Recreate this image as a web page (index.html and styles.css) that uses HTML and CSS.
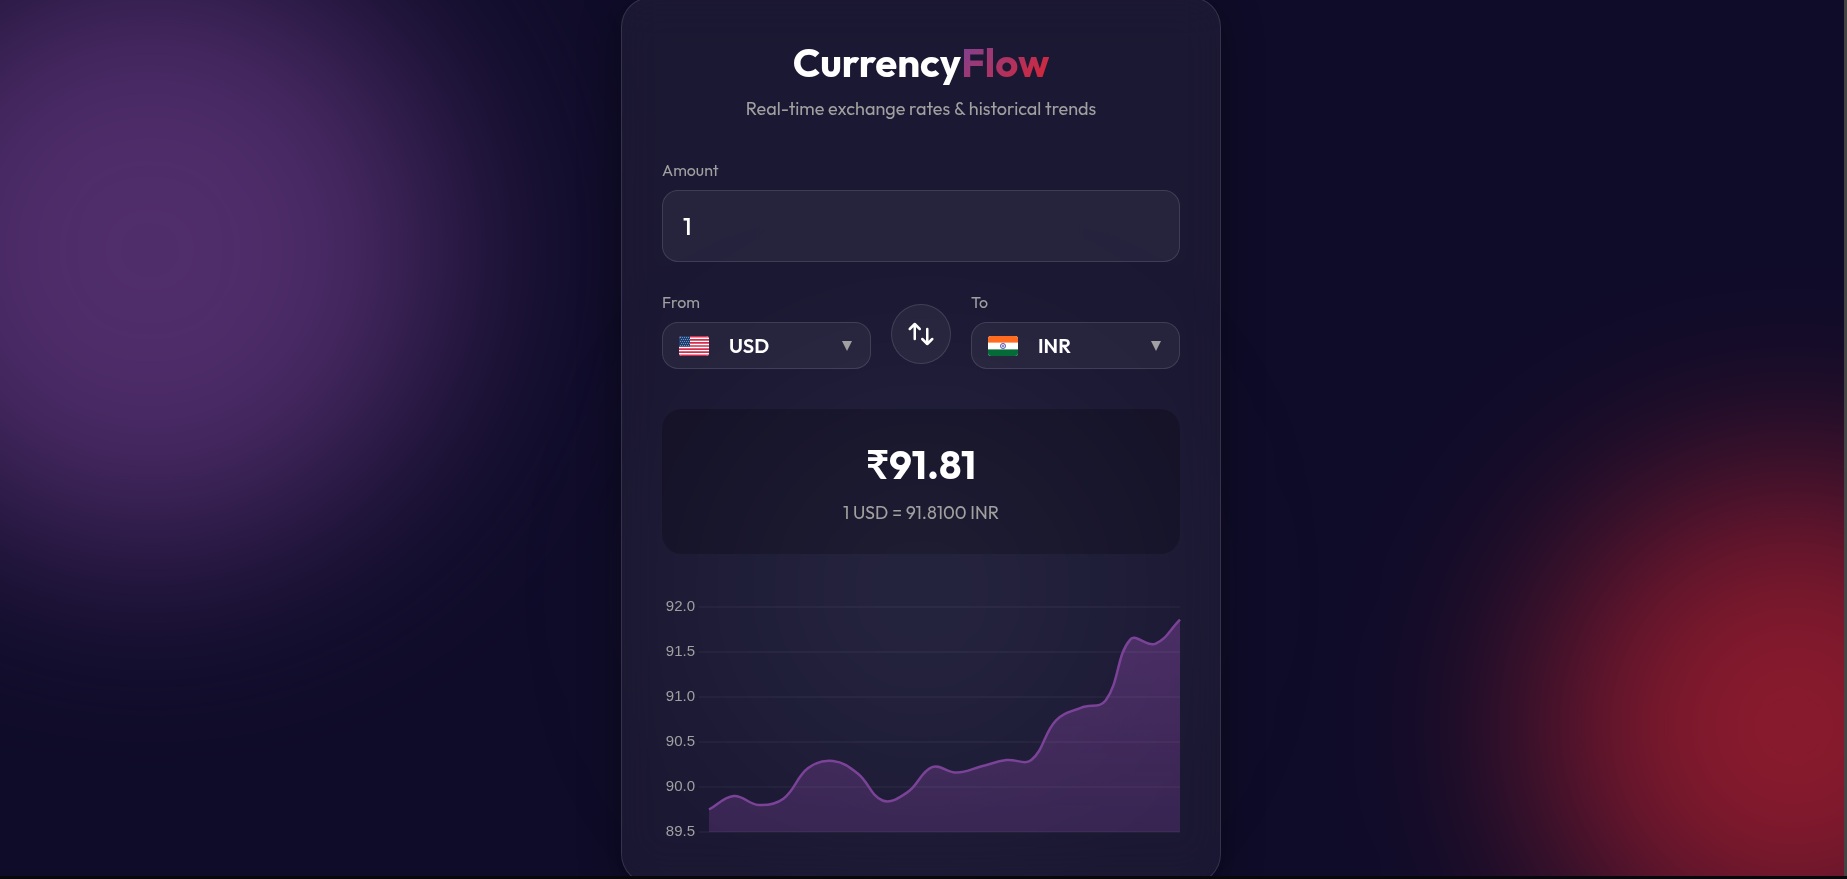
FILE: index.html
```html
<!DOCTYPE html>
<html lang="en">
<head>
<meta charset="utf-8">
<title>CurrencyFlow</title>
<link rel="stylesheet" href="styles.css">
</head>
<body>
<div class="page">
  <div class="blob blob-purple"></div>
  <div class="blob blob-red"></div>
  <div class="blob blob-slate"></div>

  <main class="card">
    <header class="header">
      <h1 class="title">Currency<span class="title-accent">Flow</span></h1>
      <p class="subtitle">Real-time exchange rates &amp; historical trends</p>
    </header>

    <form class="form">
      <div class="field">
        <label class="label" for="amount">Amount</label>
        <input class="amount" id="amount" type="text" inputmode="decimal" value="1">
      </div>

      <div class="pair">
        <div class="field">
          <label class="label" for="from">From</label>
          <div class="picker">
            <svg class="flag" viewBox="0 0 30 20" aria-hidden="true">
              <rect width="30" height="20" fill="#fff"/>
              <path d="M0 .8h30M0 3.9h30M0 6.9h30M0 10h30M0 13.1h30M0 16.1h30M0 19.2h30" stroke="#d22f4e" stroke-width="1.6"/>
              <rect width="11" height="10.5" fill="#1f3f70"/>
              <path d="M1 1.5h10M2 3.5h9M1 5.5h10M2 7.5h9M1 9.5h10" stroke="#6f93b8" stroke-width="1" stroke-dasharray="1 1"/>
            </svg>
            <select class="select" id="from">
              <option selected>USD</option>
              <option>INR</option>
            </select>
            <svg class="caret" viewBox="0 0 10 10" aria-hidden="true"><path d="M0 0h10L5 10z"/></svg>
          </div>
        </div>

        <button class="swap" type="button" aria-label="Swap currencies">
          <svg class="swap-icon" viewBox="0 0 24 24" aria-hidden="true">
            <path d="M7 16V4m0 0L3 8m4-4l4 4m6 0v12m0 0l4-4m-4 4l-4-4"/>
          </svg>
        </button>

        <div class="field">
          <label class="label" for="to">To</label>
          <div class="picker">
            <svg class="flag" viewBox="0 0 30 20" aria-hidden="true">
              <rect width="30" height="20" fill="#fff"/>
              <rect width="30" height="6.6" fill="#ff6b1f"/>
              <rect y="13.4" width="30" height="6.6" fill="#046a38"/>
              <circle cx="15" cy="10" r="2.6" fill="none" stroke="#4a45ad" stroke-width=".8"/>
              <path d="M15 7.4v5.2M12.4 10h5.2M13.2 8.2l3.6 3.6M16.8 8.2l-3.6 3.6" stroke="#4a45ad" stroke-width=".4"/>
            </svg>
            <select class="select" id="to">
              <option>USD</option>
              <option selected>INR</option>
            </select>
            <svg class="caret" viewBox="0 0 10 10" aria-hidden="true"><path d="M0 0h10L5 10z"/></svg>
          </div>
        </div>
      </div>
    </form>

    <section class="result">
      <output class="result-value" for="amount from to">₹91.81</output>
      <p class="result-rate">1 USD = 91.8100 INR</p>
    </section>

    <section class="chart" aria-label="Exchange rate history">
      <div class="axis">
        <span>92.0</span><span>91.5</span><span>91.0</span><span>90.5</span><span>90.0</span><span>89.5</span>
      </div>
      <div class="plot">
        <svg class="plot-svg" viewBox="0 0 471 225" preserveAspectRatio="none" aria-hidden="true">
          <defs>
            <linearGradient id="area-fill" x1="0" y1="0" x2="0" y2="225" gradientUnits="userSpaceOnUse">
              <stop offset="0" stop-color="#7b4397" stop-opacity=".5"/>
              <stop offset="1" stop-color="#7b4397" stop-opacity=".3"/>
            </linearGradient>
          </defs>
          <path class="area" id="area"/>
          <path class="grid" d="M-10 0H471M-10 45H471M-10 90H471M-10 135H471M-10 180H471M-10 225H471"/>
          <path class="line" id="line"/>
        </svg>
      </div>
    </section>
  </main>
</div>
<script src="chart.js"></script>
</body>
</html>
```
FILE: styles.css
```css
* {
  box-sizing: border-box;
}

body {
  margin: 0;
  background: #08070c;
  color: #fff;
  font-family: Outfit, Lato, sans-serif;
}

.page {
  position: relative;
  display: flex;
  align-items: flex-start;
  justify-content: center;
  height: calc(100vh - 3px);
  padding-right: 2px;
  overflow: hidden;
  background: #0f0c29;
  border-right: 3px solid #444;
}

/* Blurred colour spots behind the card */
.blob {
  position: absolute;
  border-radius: 50%;
  opacity: 0.6;
  filter: blur(100px);
}

.blob-purple {
  top: -50px;
  left: -150px;
  width: 600px;
  height: 600px;
  background: #7b4397;
}

.blob-red {
  right: -200px;
  bottom: -100px;
  width: 500px;
  height: 500px;
  background: #dc2430;
}

.blob-slate {
  top: 400px;
  left: 50%;
  width: 380px;
  height: 380px;
  margin-left: -190px;
  background: #24243e;
}

.card {
  position: relative;
  flex: none;
  width: 600px;
  margin-top: -3px;
  padding: 40px;
  border: 1px solid rgba(255, 255, 255, 0.12);
  border-radius: 30px;
  background: rgba(255, 255, 255, 0.05);
  box-shadow: 0 8px 40px rgba(0, 0, 0, 0.4);
  backdrop-filter: blur(20px);
}

.header {
  margin-bottom: 39px;
  text-align: center;
}

.title {
  margin: 0 0 10px;
  font-size: 40px;
  font-weight: 700;
  line-height: 48px;
}

.title-accent {
  background: linear-gradient(135deg, #7b4397, #dc2430);
  background-clip: text;
  color: transparent;
}

.subtitle {
  margin: 0;
  color: #a0a0a0;
  font-size: 18px;
  line-height: 25px;
}

.form {
  display: flex;
  flex-direction: column;
  gap: 30px;
  margin-bottom: 40px;
}

.field {
  display: flex;
  flex: 1;
  flex-direction: column;
  gap: 10px;
  min-width: 0;
}

.label {
  color: #a0a0a0;
  font-size: 16px;
  line-height: 20px;
}

.amount {
  width: 100%;
  height: 72px;
  padding: 0 20px;
  border: 1px solid rgba(255, 255, 255, 0.12);
  border-radius: 16px;
  background: rgba(255, 255, 255, 0.05);
  color: #fff;
  font: 500 24px Outfit, Lato, sans-serif;
}

.pair {
  display: flex;
  align-items: flex-end;
  gap: 20px;
}

.picker {
  display: flex;
  align-items: center;
  gap: 20px;
  height: 47px;
  padding: 0 18px 0 16px;
  border: 1px solid rgba(255, 255, 255, 0.12);
  border-radius: 16px;
  background: rgba(255, 255, 255, 0.05);
}

.flag {
  flex: none;
  width: 30px;
  height: 20px;
  border-radius: 3px;
}

.select {
  flex: 1;
  min-width: 0;
  padding: 0;
  border: 0;
  appearance: none;
  background: transparent;
  color: #fff;
  font: 600 20px Outfit, Lato, sans-serif;
}

.select option {
  color: #111;
}

.caret {
  flex: none;
  width: 10px;
  height: 10px;
  fill: #a0a0a0;
}

.swap {
  display: grid;
  place-items: center;
  flex: none;
  width: 60px;
  height: 60px;
  margin-bottom: 5px;
  padding: 0;
  border: 1px solid rgba(255, 255, 255, 0.12);
  border-radius: 50%;
  background: rgba(255, 255, 255, 0.05);
}

.swap-icon {
  width: 30px;
  height: 30px;
  fill: none;
  stroke: #fff;
  stroke-width: 2;
  stroke-linecap: round;
  stroke-linejoin: round;
}

.result {
  display: flex;
  flex-direction: column;
  align-items: center;
  gap: 10px;
  padding: 30px 30px 28px;
  border-radius: 20px;
  background: rgba(0, 0, 0, 0.2);
}

.result-value {
  font-size: 40px;
  font-weight: 700;
  line-height: 50px;
}

.result-rate {
  margin: 0;
  color: #a0a0a0;
  font-size: 18px;
  line-height: 27px;
}

.chart {
  display: flex;
  gap: 14px;
  margin-top: 42px;
  padding-bottom: 2px;
}

.axis {
  display: flex;
  flex-direction: column;
  justify-content: space-between;
  width: 33px;
  color: #a0a0a0;
  font-family: "Liberation Sans", sans-serif;
  font-size: 15px;
  line-height: 20px;
  text-align: right;
}

.plot {
  flex: 1;
  padding: 11px 0 9px;
}

.plot-svg {
  display: block;
  width: 100%;
  height: 225px;
  overflow: visible;
}

.area {
  fill: url(#area-fill);
}

.grid {
  fill: none;
  stroke: rgba(255, 255, 255, 0.07);
  stroke-width: 1;
}

.line {
  fill: none;
  stroke: #7b4397;
  stroke-width: 2.5;
}
```
FILE: chart.js
```js
const rates = [
  89.75, 89.90, 89.80, 89.87, 90.21, 90.29, 90.15, 89.85, 89.94, 90.22,
  90.16, 90.23, 90.30, 90.30, 90.74, 90.88, 90.96, 91.64, 91.59, 91.86
];
const WIDTH = 471;
const HEIGHT = 225;
const MIN = 89.5;
const MAX = 92;
const TENSION = 0.4;

const points = rates.map((rate, i) => ({
  x: (i * WIDTH) / (rates.length - 1),
  y: HEIGHT - ((rate - MIN) / (MAX - MIN)) * HEIGHT
}));

// Control points of a cardinal spline, weighted by the distance to each neighbour
const controls = points.map((p, i) => {
  const prev = points[i - 1] || p;
  const next = points[i + 1] || p;
  const before = Math.hypot(p.x - prev.x, p.y - prev.y);
  const after = Math.hypot(next.x - p.x, next.y - p.y);
  const a = (TENSION * before) / (before + after);
  const b = (TENSION * after) / (before + after);
  const dx = next.x - prev.x;
  const dy = next.y - prev.y;
  return { inX: p.x - a * dx, inY: p.y - a * dy, outX: p.x + b * dx, outY: p.y + b * dy };
});

let path = `M${points[0].x} ${points[0].y}`;
for (let i = 1; i < points.length; i += 1) {
  const from = controls[i - 1];
  const to = controls[i];
  path += `C${from.outX} ${from.outY} ${to.inX} ${to.inY} ${points[i].x} ${points[i].y}`;
}

document.getElementById("line").setAttribute("d", path);
document.getElementById("area").setAttribute("d", `${path}V${HEIGHT}H0Z`);
```
